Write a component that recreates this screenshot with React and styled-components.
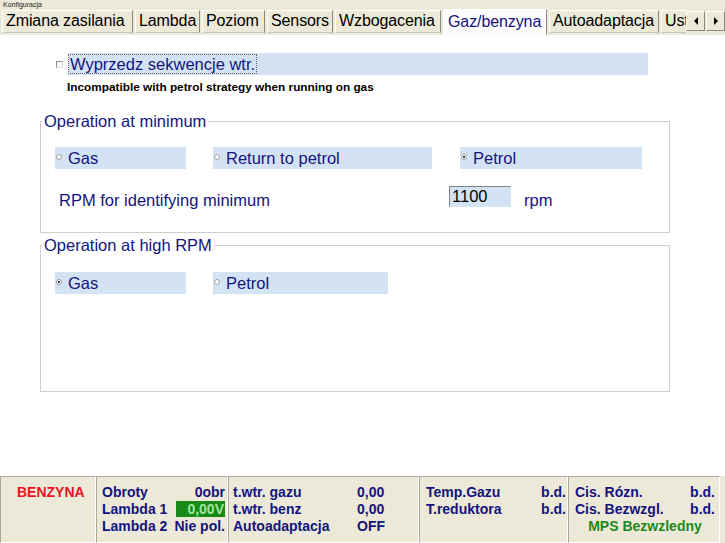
import React from 'react';
import styled, { createGlobalStyle } from 'styled-components';

const GlobalStyle = createGlobalStyle`
  html, body {
    margin: 0;
    padding: 0;
  }
  body {
    font-family: 'Liberation Sans', Arial, sans-serif;
    background: #ece9d8;
  }
`;

const NAVY = '#14147e';
const FIELD_BLUE = '#d4e3f4';

const Window = styled.div`
  width: 725px;
  height: 543px;
  display: flex;
  flex-direction: column;
  background: #ece9d8;
  overflow: hidden;
`;

const TitleBar = styled.div`
  height: 9px;
  font-size: 7px;
  line-height: 9px;
  padding-left: 3px;
  color: #222;
`;

const TabStrip = styled.div`
  height: 26px;
  display: flex;
`;

const TabList = styled.div`
  flex: 1;
  display: flex;
  gap: 2px;
  padding-left: 2px;
  overflow: hidden;
`;

const Tab = styled.div`
  flex-shrink: 0;
  box-sizing: border-box;
  width: ${p => p.$w}px;
  height: ${p => (p.$active ? 26 : 23)}px;
  margin-top: ${p => (p.$active ? 0 : 1)}px;
  padding-left: ${p => (p.$active ? 4 : 3)}px;
  border: 1px solid;
  border-color: #fff #8d8a7c ${p => (p.$active ? '#fcfcfe' : '#c9c5b4')} #fff;
  background: ${p => (p.$active ? '#fcfcfe' : '#ece9d8')};
  color: ${p => (p.$active ? NAVY : '#000')};
  font-size: 16px;
  letter-spacing: -0.1px;
  line-height: ${p => (p.$active ? 23 : 20)}px;
  white-space: nowrap;
  overflow: hidden;
`;

const ScrollButtons = styled.div`
  display: flex;
  gap: 1px;
  padding-top: 2px;
`;

const ScrollButton = styled.div`
  width: 19px;
  height: 20px;
  box-sizing: border-box;
  border: 1px solid;
  border-color: #fff #8d8a7c #8d8a7c #fff;
  background: #ece9d8;
  display: flex;
  align-items: center;
  justify-content: center;
`;

const Arrow = styled.span`
  width: 0;
  height: 0;
  border-top: 4px solid transparent;
  border-bottom: 4px solid transparent;
  ${p => (p.$dir === 'left' ? 'border-right: 4px solid #000;' : 'border-left: 4px solid #000;')}
`;

const Content = styled.div`
  flex: 1;
  background: #fff;
  display: flex;
  flex-direction: column;
`;

const CheckRow = styled.div`
  display: flex;
  align-items: center;
  margin: 18px 0 0 56px;
  width: 592px;
`;

const CheckBox = styled.span`
  width: 7px;
  height: 7px;
  box-sizing: border-box;
  border: 1px solid;
  border-color: #8c8c8c #d8d8d8 #d8d8d8 #8c8c8c;
  background: #fff;
  margin-right: 5px;
`;

const CheckBar = styled.div`
  flex: 1;
  height: 22px;
  background: ${FIELD_BLUE};
  display: flex;
  align-items: center;
`;

const FocusLabel = styled.span`
  height: 20px;
  box-sizing: border-box;
  border: 1px dotted #6a6a6a;
  padding: 0 1px;
  font-size: 16.5px;
  line-height: 18px;
  color: ${NAVY};
`;

const Note = styled.div`
  margin: 6px 0 0 67px;
  font-size: 11.8px;
  font-weight: bold;
  line-height: 13px;
  color: #000;
`;

const Group = styled.fieldset`
  margin: ${p => p.$top}px 55px 0 40px;
  padding: 0;
  border: 1px solid #cfcfcf;
  min-width: 0;
`;

const Legend = styled.legend`
  margin-left: 1px;
  padding: 0 2px;
  font-size: 16.5px;
  line-height: 18px;
  color: ${NAVY};
`;

const GroupBody = styled.div`
  padding: 0 0 ${p => p.$bottom}px 14px;
`;

const RadioRow = styled.div`
  display: flex;
  margin-top: ${p => p.$top}px;
`;

const RadioItem = styled.div`
  width: ${p => p.$w}px;
  margin-right: ${p => p.$gap || 0}px;
  height: 22px;
  background: ${FIELD_BLUE};
  display: flex;
  align-items: center;
  padding-left: 1px;
  box-sizing: border-box;
  font-size: 16.5px;
  color: ${NAVY};
`;

const RadioDot = styled.span`
  width: 6px;
  height: 6px;
  box-sizing: border-box;
  border-radius: 50%;
  border: 1px solid #a0a0a0;
  background: #fff;
  margin: 0 6px 3px 0;
  display: flex;
  align-items: center;
  justify-content: center;

  &::after {
    content: '';
    width: 2px;
    height: 2px;
    border-radius: 50%;
    background: ${p => (p.$checked ? '#000' : 'transparent')};
  }
`;

const RpmRow = styled.div`
  display: flex;
  align-items: center;
  margin-top: 17px;
  height: 21px;
`;

const RpmLabel = styled.span`
  width: 390px;
  margin: 7px 0 0 4px;
  font-size: 16.5px;
  color: ${NAVY};
`;

const RpmInput = styled.div`
  width: 62px;
  height: 21px;
  box-sizing: border-box;
  border: 1px solid;
  border-color: #808080 ${FIELD_BLUE} ${FIELD_BLUE} #808080;
  background: ${FIELD_BLUE};
  padding-left: 2px;
  font-size: 16.5px;
  line-height: 18px;
  color: #000;
`;

const Unit = styled.span`
  margin: 7px 0 0 13px;
  font-size: 16.5px;
  color: ${NAVY};
`;

const StatusBar = styled.div`
  height: 68px;
  box-sizing: border-box;
  border-top: 1px solid #fff;
  display: flex;
  font-size: 14px;
  font-weight: bold;
  color: ${NAVY};
`;

const Section = styled.div`
  width: ${p => p.$w}px;
  box-sizing: border-box;
  border: 1px solid;
  border-color: #aca899 #fff #fff #aca899;
  padding: 7px ${p => p.$pr || 0}px 0 ${p => p.$pl || 0}px;
  line-height: 17px;
  display: grid;
  grid-template-columns: ${p => p.$cols || '1fr'};
  align-content: start;
  white-space: nowrap;
`;

const FuelLabel = styled.div`
  color: #e8141c;
  padding-left: 16px;
`;

const Value = styled.div`
  text-align: ${p => p.$align || 'right'};
`;

const GreenBox = styled.span`
  display: inline-block;
  width: 49px;
  height: 16px;
  line-height: 16px;
  padding-right: 1px;
  box-sizing: border-box;
  background: #178a17;
  color: #9ee89e;
  text-align: right;
`;

const Mps = styled.div`
  grid-column: 1 / -1;
  text-align: center;
  color: #1b8a1b;
`;

const tabs = [
  ['Zmiana zasilania', 131],
  ['Lambda', 65],
  ['Poziom', 63],
  ['Sensors', 66],
  ['Wzbogacenia', 106],
  ['Gaz/benzyna', 104],
  ['Autoadaptacja', 110],
  ['Ustawienia', 90],
];

export default function App() {
  return (
    <>
      <GlobalStyle />
      <Window>
        <TitleBar>Konfiguracja</TitleBar>
        <TabStrip>
          <TabList>
            {tabs.map(([t, w]) => (
              <Tab key={t} $w={w} $active={t === 'Gaz/benzyna'}>{t}</Tab>
            ))}
          </TabList>
          <ScrollButtons>
            <ScrollButton><Arrow $dir="left" /></ScrollButton>
            <ScrollButton><Arrow $dir="right" /></ScrollButton>
          </ScrollButtons>
        </TabStrip>

        <Content>
          <CheckRow>
            <CheckBox />
            <CheckBar>
              <FocusLabel>Wyprzedz sekwencje wtr.</FocusLabel>
            </CheckBar>
          </CheckRow>
          <Note>Incompatible with petrol strategy when running on gas</Note>

          <Group $top={18}>
            <Legend>Operation at minimum</Legend>
            <GroupBody $bottom={25}>
              <RadioRow $top={17}>
                <RadioItem $w={131} $gap={27}><RadioDot />Gas</RadioItem>
                <RadioItem $w={219} $gap={28}><RadioDot />Return to petrol</RadioItem>
                <RadioItem $w={182}><RadioDot $checked />Petrol</RadioItem>
              </RadioRow>
              <RpmRow>
                <RpmLabel>RPM for identifying minimum</RpmLabel>
                <RpmInput>1100</RpmInput>
                <Unit>rpm</Unit>
              </RpmRow>
            </GroupBody>
          </Group>

          <Group $top={3}>
            <Legend>Operation at high RPM</Legend>
            <GroupBody $bottom={97}>
              <RadioRow $top={18}>
                <RadioItem $w={131} $gap={27}><RadioDot $checked />Gas</RadioItem>
                <RadioItem $w={175}><RadioDot />Petrol</RadioItem>
              </RadioRow>
            </GroupBody>
          </Group>
        </Content>

        <StatusBar>
          <Section $w={96}>
            <FuelLabel>BENZYNA</FuelLabel>
          </Section>
          <Section $w={132} $pl={5} $pr={2} $cols="auto 1fr">
            <div>Obroty</div><Value>0obr</Value>
            <div>Lambda 1</div><Value><GreenBox>0,00V</GreenBox></Value>
            <div>Lambda 2</div><Value>Nie pol.</Value>
          </Section>
          <Section $w={191} $pl={4} $cols="124px 1fr">
            <div>t.wtr. gazu</div><Value $align="left">0,00</Value>
            <div>t.wtr. benz</div><Value $align="left">0,00</Value>
            <div>Autoadaptacja</div><Value $align="left">OFF</Value>
          </Section>
          <Section $w={149} $pl={6} $pr={1} $cols="auto 1fr">
            <div>Temp.Gazu</div><Value>b.d.</Value>
            <div>T.reduktora</div><Value>b.d.</Value>
          </Section>
          <Section $w={152} $pl={6} $pr={4} $cols="auto 1fr">
            <div>Cis. Rózn.</div><Value>b.d.</Value>
            <div>Cis. Bezwzgl.</div><Value>b.d.</Value>
            <Mps>MPS Bezwzledny</Mps>
          </Section>
        </StatusBar>
      </Window>
    </>
  );
}
